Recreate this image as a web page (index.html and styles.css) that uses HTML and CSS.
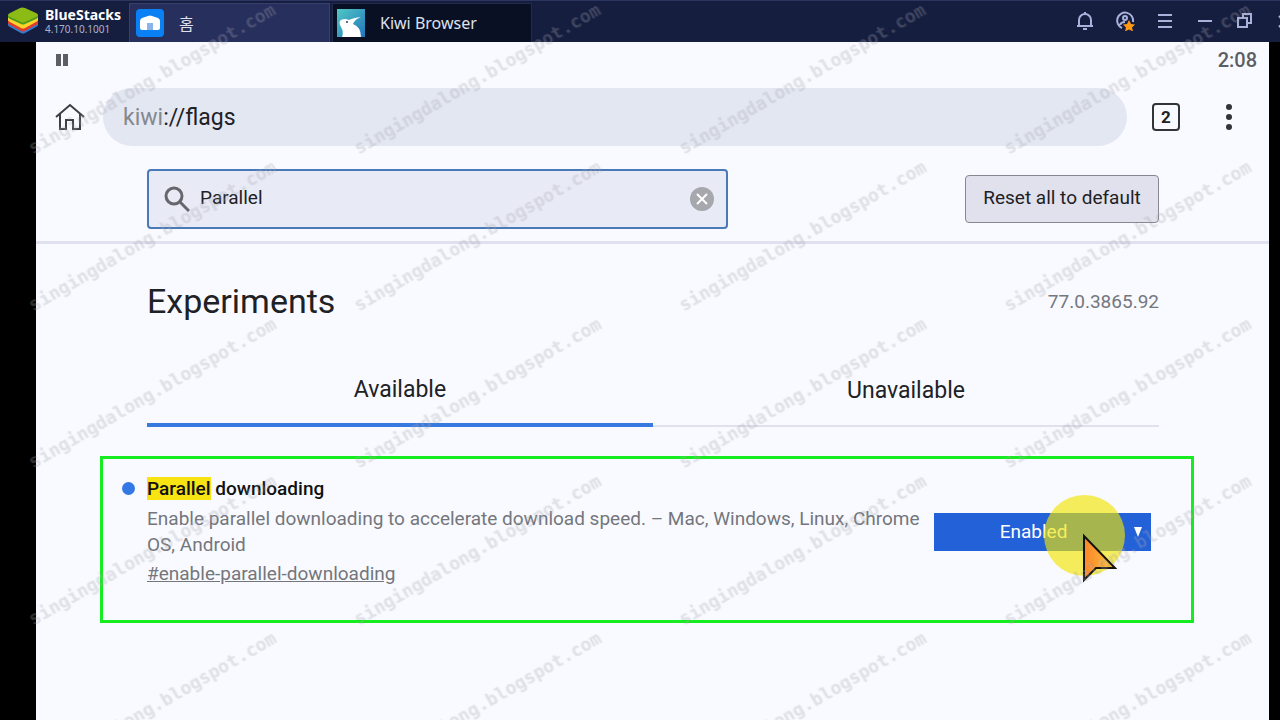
FILE: index.html
```
<!DOCTYPE html>
<html lang="ko">
<head>
<meta charset="utf-8">
<title>Kiwi Browser - flags</title>
<link rel="stylesheet" href="styles.css">
</head>
<body>
<header class="titlebar">
  <div class="brand">
    <svg class="brand-logo" viewBox="0 0 30 28" aria-hidden="true">
      <path fill="#2f7fd0" d="M0 15l15 8 15-8v3q0 1-2 2l-11 6q-2 1-4 0L2 20q-2-1-2-2z"/>
      <path fill="#e23b2e" d="M0 12l15 7 15-7v4q0 1-2 2l-11 6q-2 1-4 0L2 18q-2-1-2-2z"/>
      <path fill="#fcd42c" d="M0 9l15 7 15-7v4q0 1-2 2l-11 6q-2 1-4 0L2 15q-2-1-2-2z"/>
      <path fill="#4d9a1e" d="M0 8h30v2q0 1-2 2l-11 5q-2 1-4 0L2 12q-2-1-2-2z"/>
      <path fill="#8dbb16" d="M12 1q2-1 5 0l11 5q4 2 0 4l-11 5q-2 1-4 0L2 10q-4-2 0-4z"/>
    </svg>
    <div class="brand-text">
      <strong class="brand-name">BlueStacks</strong>
      <span class="brand-version">4.170.10.1001</span>
    </div>
  </div>
  <nav class="app-tabs">
    <button class="app-tab" type="button">
      <svg class="app-icon" viewBox="0 0 28 28" aria-hidden="true"><rect width="28" height="28" rx="4" fill="#0a80f5"/><path fill="#fff" d="M4 12q0-2 2-3l6-2q2-1 4 0l6 2q2 1 2 3v7q0 2-2 2H6q-2 0-2-2z"/><path fill="#8db4e8" d="M11 14h6v7h-6z"/></svg>
      <span>홈</span>
    </button>
    <button class="app-tab app-tab-active" type="button">
      <svg class="app-icon" viewBox="0 0 28 28" aria-hidden="true"><defs><linearGradient id="sky" x1="0" y1="0" x2="1" y2="1"><stop offset="0" stop-color="#50c8c4"/><stop offset="1" stop-color="#2275bd"/></linearGradient></defs><path fill="url(#sky)" d="M0 0h28v28H0z"/><path fill="#fff" d="M5 28q2-5-1-10-3-5 0-7 4-2 8 0 4-2 12-3-6 2-8 7 8 3 8 13z"/><circle cx="10" cy="13" r="1" fill="#345"/></svg>
      <span>Kiwi Browser</span>
    </button>
  </nav>
  <div class="window-tools">
    <button class="tool" type="button" aria-label="Notifications"><svg viewBox="0 0 20 20"><path d="M2 15h16M4 15V9a6 6 0 0 1 12 0v6M10 1v2M8 18h4"/></svg></button>
    <button class="tool" type="button" aria-label="Account"><svg viewBox="0 0 20 20"><path d="M7 17A8 8 0 1 1 18 11M5 14q1-3 5-3"/><circle cx="10" cy="7" r="2"/><path class="star" d="M14 9l2 4 4 .4-3 3 1 4-4-2-4 2 1-4-3-3 4-.4z"/></svg></button>
    <button class="tool" type="button" aria-label="Menu"><svg viewBox="0 0 20 20"><path d="M3 4h14M3 10h14M3 16h14"/></svg></button>
    <button class="tool" type="button" aria-label="Minimize"><svg viewBox="0 0 20 20"><path d="M3 10h14"/></svg></button>
    <button class="tool" type="button" aria-label="Restore"><svg viewBox="0 0 20 20"><path d="M3 7h9v9H3zM8 7V3h8v9h-4"/></svg></button>
    <button class="tool" type="button" aria-label="Close"><svg viewBox="0 0 20 20"><path d="M4 5l11 11M15 5L4 16"/></svg></button>
  </div>
</header>

<main class="device">
  <div class="statusbar">
    <svg class="pause" viewBox="0 0 14 14" aria-hidden="true"><path fill="#5d5e62" d="M1 1h5v12H1zM8 1h5v12H8z"/></svg>
    <time class="clock">2:08</time>
  </div>

  <div class="toolbar">
    <button class="icon-button" type="button" aria-label="Home"><svg class="home" viewBox="0 0 30 28"><path d="M1 14L15 2l14 12M5 11v15h6v-9h7v9h7V11"/></svg></button>
    <div class="address" role="textbox" aria-label="Address"><span class="scheme">kiwi</span>://flags</div>
    <button class="tab-count" type="button" aria-label="Open tabs">2</button>
    <button class="icon-button icon-more" type="button" aria-label="More"><svg class="dots" viewBox="0 0 6 26"><circle cx="3" cy="3" r="3"/><circle cx="3" cy="13" r="3"/><circle cx="3" cy="23" r="3"/></svg></button>
  </div>

  <form class="searchbar">
    <div class="search">
      <svg class="lens" viewBox="0 0 26 26" aria-hidden="true"><circle cx="10" cy="10" r="8"/><path d="M16 16l9 9"/></svg>
      <input class="search-input" type="text" value="Parallel" aria-label="Search flags">
      <button class="clear" type="button" aria-label="Clear search"><svg viewBox="0 0 24 24"><circle cx="12" cy="12" r="12"/><path d="M7 7l10 10M17 7L7 17"/></svg></button>
    </div>
    <button class="reset" type="button">Reset all to default</button>
  </form>

  <section class="content">
    <div class="heading">
      <h1 class="title">Experiments</h1>
      <span class="version">77.0.3865.92</span>
    </div>
    <div class="tabs" role="tablist">
      <button class="tab tab-selected" type="button" role="tab" aria-selected="true">Available</button>
      <button class="tab" type="button" role="tab" aria-selected="false">Unavailable</button>
    </div>
    <article class="flag">
      <span class="dot"></span>
      <div class="flag-text">
        <h2 class="flag-name"><label for="flag-state"><mark>Parallel</mark> downloading</label></h2>
        <p class="flag-desc">Enable parallel downloading to accelerate download speed. – Mac, Windows, Linux, Chrome OS, Android</p>
        <a class="flag-link" href="#enable-parallel-downloading">#enable-parallel-downloading</a>
      </div>
      <div class="state">
        <select class="state-select" id="flag-state">
          <option>Default</option>
          <option selected>Enabled</option>
          <option>Disabled</option>
        </select>
        <svg class="arrow" viewBox="0 0 8 10" aria-hidden="true"><path fill="#fff" d="M0 0h8L4 10z"/></svg>
        <span class="halo"></span>
        <svg class="pointer" viewBox="0 0 36 50" aria-hidden="true"><defs><linearGradient id="amber" x1="0" y1="0" x2="1" y2="0"><stop offset=".1" stop-color="#fb8b2c"/><stop offset="1" stop-color="#f8c63c"/></linearGradient></defs><path fill="url(#amber)" stroke="#16120c" stroke-width="2" d="M2 3l31 32H14L2 47z"/></svg>
      </div>
    </article>
  </section>
</main>

<div class="watermarks" aria-hidden="true">
  <span>singingdalong.blogspot.com</span><span>singingdalong.blogspot.com</span><span>singingdalong.blogspot.com</span><span>singingdalong.blogspot.com</span>
  <span>singingdalong.blogspot.com</span><span>singingdalong.blogspot.com</span><span>singingdalong.blogspot.com</span><span>singingdalong.blogspot.com</span>
  <span>singingdalong.blogspot.com</span><span>singingdalong.blogspot.com</span><span>singingdalong.blogspot.com</span><span>singingdalong.blogspot.com</span>
  <span>singingdalong.blogspot.com</span><span>singingdalong.blogspot.com</span><span>singingdalong.blogspot.com</span><span>singingdalong.blogspot.com</span>
  <span>singingdalong.blogspot.com</span><span>singingdalong.blogspot.com</span><span>singingdalong.blogspot.com</span><span>singingdalong.blogspot.com</span>
</div>
</body>
</html>
```
FILE: styles.css
```
* { box-sizing: border-box; }
body {
  margin: 0;
  min-height: 100vh;
  display: flex;
  flex-direction: column;
  position: relative;
  background: #000;
  font-family: Roboto, "Noto Sans CJK KR", sans-serif;
  color: #202124;
}
button, input, select { font: inherit; color: inherit; margin: 0; }
button { padding: 0; border: 0; background: none; }

.titlebar {
  display: flex;
  height: 42px;
  background: #161e40;
  border-top: 1px solid #2b3560;
  font-family: "Noto Sans", "Noto Sans CJK KR", sans-serif;
  overflow: hidden;
}
.brand { display: flex; align-items: center; gap: 7px; width: 129px; padding: 0 0 2px 8px; flex: none; }
.brand-logo { width: 30px; height: 28px; flex: none; }
.brand-text { display: flex; flex-direction: column; }
.brand-name { font-size: 14px; line-height: 16px; color: #fff; }
.brand-version { font-size: 10px; line-height: 12px; color: #aeb4cd; }
.app-tabs { display: flex; gap: 2px; padding-top: 2px; flex: 1; }
.app-tab {
  display: flex;
  align-items: center;
  gap: 15px;
  width: 201px;
  padding: 0 0 1px 6px;
  border: 1px solid #36406e;
  border-bottom: 0;
  background: #272f5d;
  color: #dfe2ee;
  font-size: 16px;
}
.app-tab-active { width: 200px; background: #0a1024; border-color: #222b4e; padding-left: 4px; }
.app-icon { width: 28px; height: 28px; }
.window-tools { display: flex; align-items: center; gap: 20px; margin-right: -15px; padding-bottom: 2px; flex: none; }
.tool { width: 20px; height: 20px; }
.tool svg { display: block; width: 20px; height: 20px; fill: none; stroke: #a9b2da; stroke-width: 2; }
.tool .star { fill: #ff9814; stroke: none; }

.device {
  flex: 1;
  margin: 0 11px 0 36px;
  background: #f8faff;
}
.statusbar { display: flex; align-items: center; justify-content: space-between; height: 36px; padding: 0 12px 0 19px; }
.pause { width: 14px; height: 14px; }
.clock { font-size: 20px; font-weight: 500; color: #5d5e62; }

.toolbar { display: flex; align-items: center; padding: 10px 22px 0 19px; }
.icon-button { width: 36px; }
.home { display: block; width: 30px; height: 28px; fill: none; stroke: #3d3e42; stroke-width: 2; }
.address { flex: 1; height: 58px; margin-left: 12px; padding-left: 20px; border-radius: 29px; background: #e3e7f2; font-size: 23px; line-height: 60px; }
.scheme { color: #85888e; }
.tab-count { width: 28px; height: 28px; margin: 0 31px 0 25px; border: 2px solid #333438; border-radius: 4px; font-size: 17px; font-weight: 700; line-height: 24px; }
.icon-more { display: flex; justify-content: center; }
.dots { width: 6px; height: 26px; fill: #333438; }

.searchbar { display: flex; align-items: center; justify-content: space-between; margin: 0; padding: 23px 110px 12px 111px; border-bottom: 3px solid #dfe1ef; }
.search { display: flex; align-items: center; width: 581px; height: 60px; padding: 0 12px 0 15px; border: 2px solid #4a79b8; border-radius: 4px; background: #e8eaf6; }
.lens { width: 26px; height: 26px; fill: none; stroke: #65676d; stroke-width: 3; flex: none; }
.search-input { flex: 1; min-width: 0; height: 40px; padding: 0 10px 4px; border: 0; background: none; outline: 0; font-size: 19px; }
.clear svg { display: block; width: 24px; height: 24px; fill: #a6a8ae; stroke: #fff; stroke-width: 2; }
.clear circle { stroke: none; }
.reset { width: 194px; height: 48px; padding-bottom: 4px; border: 1px solid #858792; border-radius: 4px; background: #e0e1ed; font-size: 19px; }

.content { padding: 0 110px 0 111px; }
.heading { display: flex; align-items: center; justify-content: space-between; padding-top: 36px; }
.title { margin: 0; font-size: 34px; font-weight: 400; line-height: 42px; }
.version { font-size: 19px; color: #75777d; }
.tabs { display: flex; margin-top: 41px; }
.tab { flex: 1; height: 64px; padding-bottom: 8px; border-bottom: 2px solid #dfe2ec; font-size: 23px; }
.tab-selected { border-bottom: 4px solid #3679df; }

.flag { display: flex; margin: 29px -35px 0 -47px; min-height: 167px; padding: 17px 40px 0 19px; border: 3px solid #17ec20; }
.dot { flex: none; width: 13px; height: 13px; margin: 6px 12px 0 0; border-radius: 50%; background: #3478e5; }
.flag-text { flex: 1; }
.flag-name { margin: 0; font-size: 19px; font-weight: 500; line-height: 26px; color: #111; }
.flag-name mark { background: #f8e413; color: inherit; }
.flag-desc { margin: 4px 0 2px; font-size: 19px; line-height: 26px; color: #74767c; }
.flag-link { font-size: 19px; line-height: 28px; color: #74767c; }
.state { position: relative; flex: none; width: 217px; height: 38px; margin: 37px 0 0 8px; }
.state-select { appearance: none; width: 100%; height: 100%; padding: 0 18px 2px 0; border: 0; border-radius: 0; background: #2361d9; color: #fff; font-size: 19px; text-align: center; text-align-last: center; }
.arrow { position: absolute; right: 9px; top: 14px; width: 8px; height: 10px; }
.halo { position: absolute; left: 110px; top: -18px; width: 81px; height: 81px; border-radius: 50%; background: rgba(242, 228, 0, .64); }
.pointer { position: absolute; left: 148px; top: 20px; width: 36px; height: 50px; }

.watermarks {
  position: absolute;
  inset: 0;
  padding-left: 34px;
  display: grid;
  grid-template-columns: repeat(4, 325px);
  grid-auto-rows: 157px;
  overflow: hidden;
  pointer-events: none;
}
.watermarks span {
  align-self: end;
  justify-self: start;
  font: 700 18px/18px "DejaVu Sans Mono", monospace;
  white-space: nowrap;
  color: rgba(215, 215, 222, .16);
  text-shadow: 1px 1px 1px rgba(120, 120, 125, .17);
  transform-origin: 0 100%;
  transform: rotate(-30deg);
}
```
